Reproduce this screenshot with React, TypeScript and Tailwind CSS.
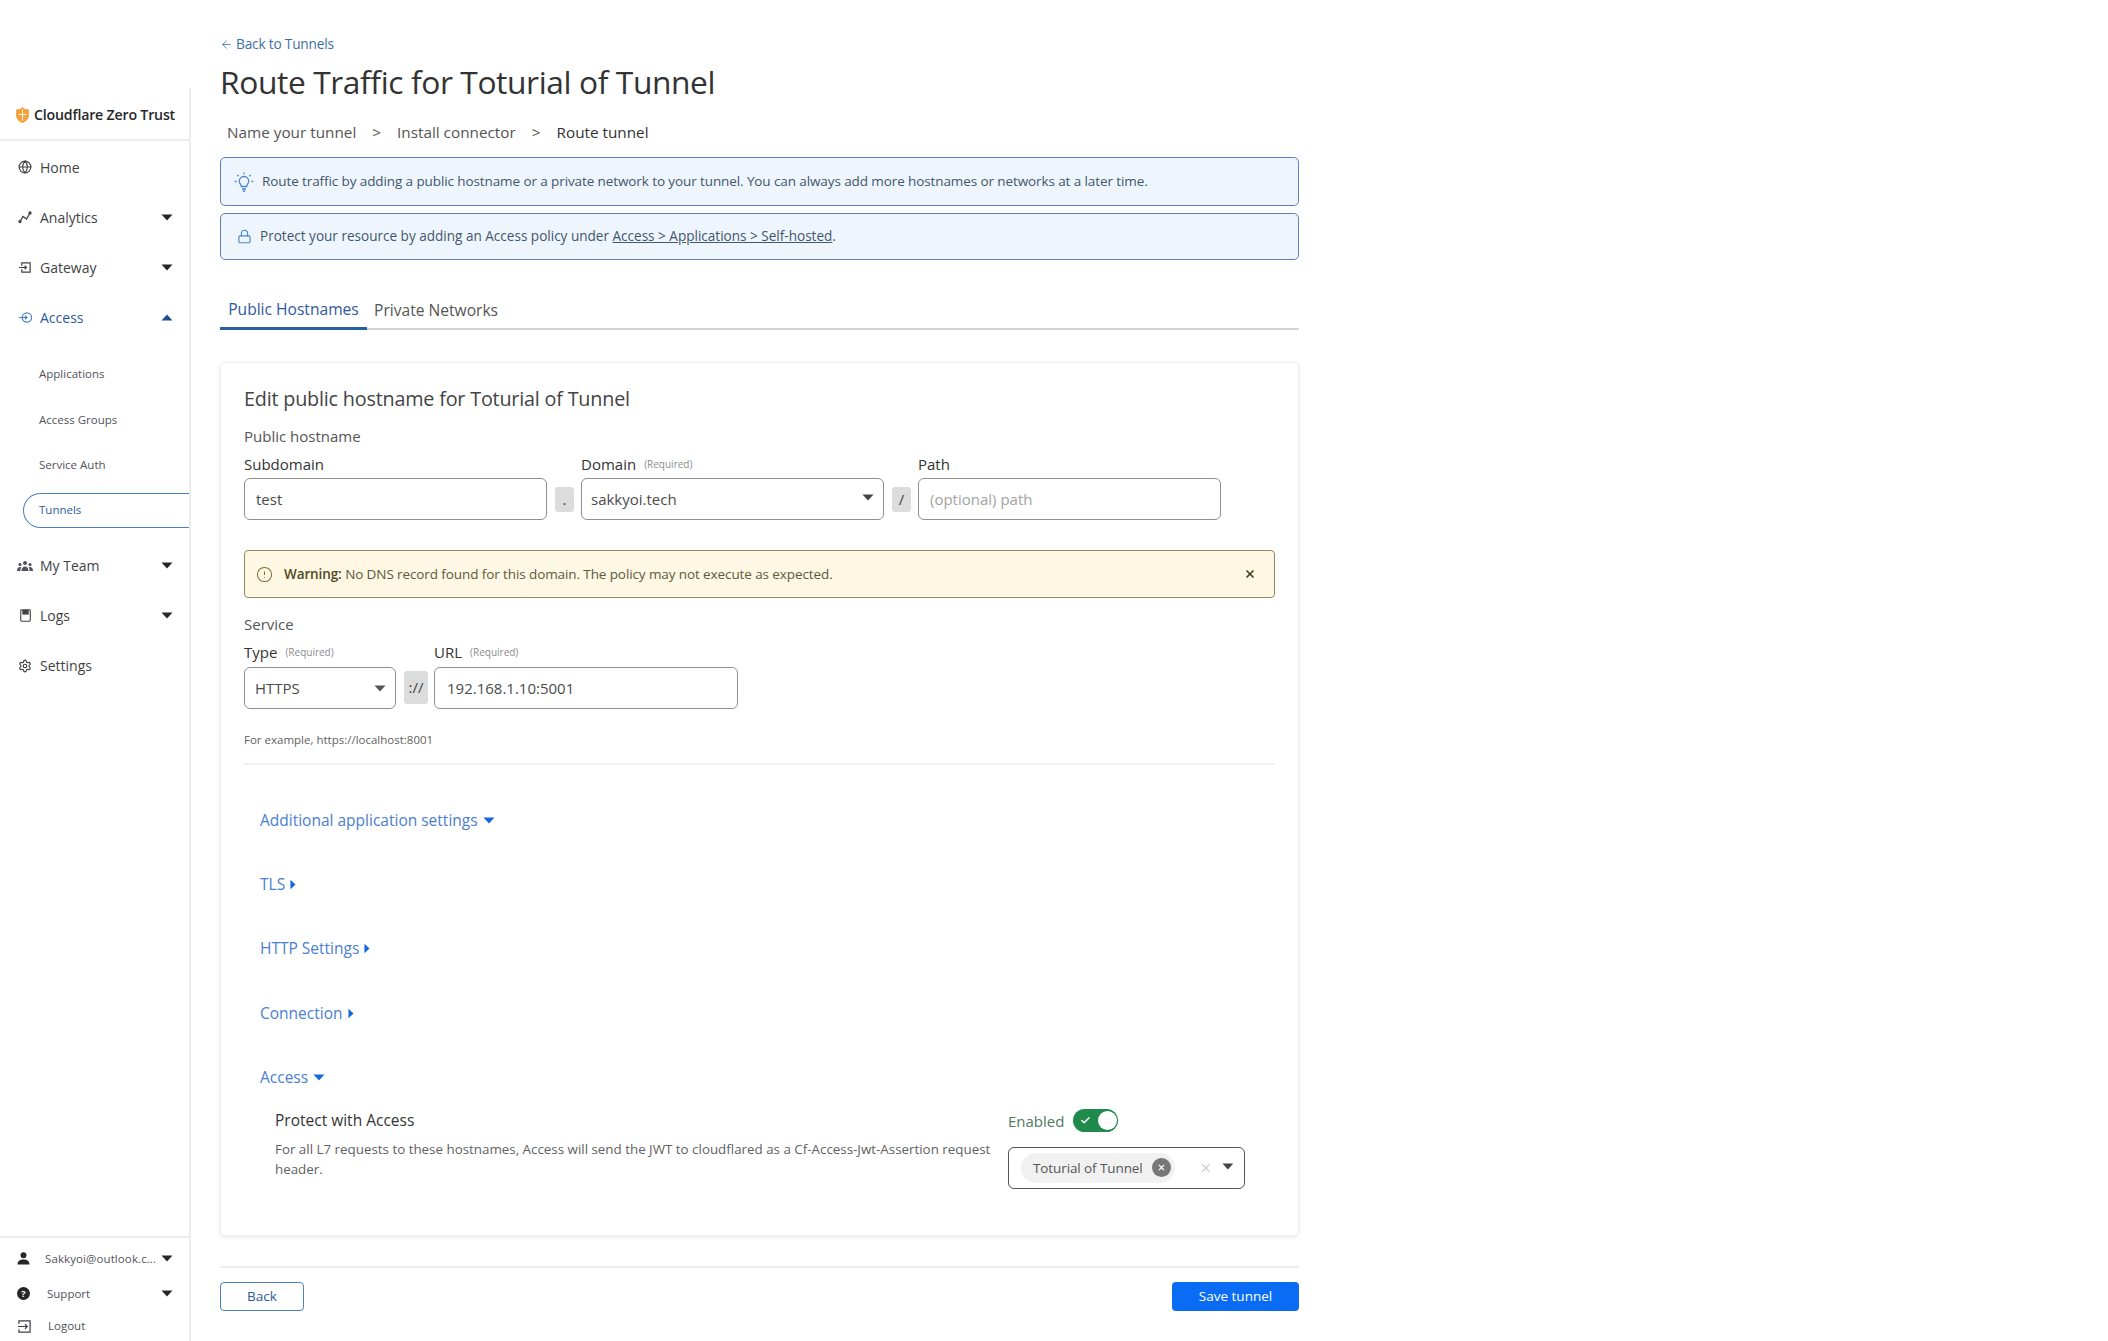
import { ArrowLeft, Check, CircleAlert, Globe, Lock, Settings, X } from "lucide-react";
import type { ReactNode } from "react";

const Caret = ({ className = "" }: { className?: string }) => (
  <svg viewBox="0 0 12 7" className={`w-[12px] h-[7px] ${className}`} fill="currentColor">
    <path d="M0.5 0.5h11L6 6.5z" />
  </svg>
);

const CaretRight = () => (
  <svg viewBox="0 0 7 12" className="w-[6px] h-[11px] text-[#1668dc]" fill="currentColor">
    <path d="M0.5 0.5v11L6.5 6z" />
  </svg>
);

const ShieldLogo = () => (
  <svg viewBox="0 0 16 18" className="w-[15px] h-[18px]">
    <path d="M8 0.5 10 2.2 14.8 3v6.5c0 3.8-3 6.600-6.800 8-3.800-1.400-6.800-4.200-6.800-8V3L6 2.200z" fill="#f6a23a" />
    <path d="M8 3v12M3.500 8.500h9" stroke="#fff" strokeWidth="1" fill="none" />
  </svg>
);

const BulbIcon = () => (
  <svg viewBox="0 0 20 20" className="w-[20px] h-[20px]" fill="none" stroke="#4a86c7" strokeWidth="1.300">
    <path d="M7.300 14.500c0-2-2-2.800-2-5.300a4.700 4.700 0 0 1 9.400 0c0 2.500-2 3.300-2 5.300z" />
    <path d="M8 17h4M8.800 19h2.400" />
    <path d="M10 0.500v1.700M3.300 3l1.200 1.200M16.700 3l-1.200 1.200M0.800 9.500h1.800M17.400 9.500h1.800" />
  </svg>
);

const AnalyticsIcon = () => (
  <svg viewBox="0 0 14 14" className="w-[14px] h-[14px]" fill="none" stroke="#3f3f46" strokeWidth="1.300">
    <path d="M2 11.500 5 6.500l3.500 2.500L12 3" />
    <circle cx="2" cy="11.500" r="1" />
    <circle cx="12" cy="3" r="1" fill="#3f3f46" />
  </svg>
);

const GatewayIcon = () => (
  <svg viewBox="0 0 16 14" className="w-[15px] h-[13px]" fill="none" stroke="#3f3f46" strokeWidth="1.300">
    <path d="M4 5V2h9v10H4V9M1 7h8M7 5l2 2-2 2" />
  </svg>
);

const AccessIcon = () => (
  <svg viewBox="0 0 16 14" className="w-[15px] h-[13px]" fill="none" stroke="#4a7fc1" strokeWidth="1.300">
    <circle cx="9.500" cy="7" r="5" />
    <path d="M0.500 7h9M7.500 5l2 2-2 2" />
  </svg>
);

const TeamIcon = () => (
  <svg viewBox="0 0 16 12" className="w-[16px] h-[12px]" fill="#52525b">
    <circle cx="8" cy="3" r="2" />
    <circle cx="3" cy="4.500" r="1.600" />
    <circle cx="13" cy="4.500" r="1.600" />
    <path d="M4.500 11c0-3 1.500-4.500 3.500-4.500s3.500 1.500 3.500 4.500zM0 11c0-2.500 1.200-4 3-4 .5 0 .9.1 1.200.3C3.600 8.300 3.400 9.500 3.400 11zM16 11c0-2.500-1.200-4-3-4-.5 0-.9.1-1.200.3.6 1 .8 2.200.8 3.700z" />
  </svg>
);

const LogsIcon = () => (
  <svg viewBox="0 0 12 14" className="w-[11px] h-[13px]" fill="none" stroke="#3f3f46" strokeWidth="1.200">
    <rect x="0.800" y="0.800" width="10.400" height="12.400" rx="1" />
    <rect x="2.500" y="1" width="7" height="5" fill="#3f3f46" stroke="none" />
  </svg>
);

const UserIcon = () => (
  <svg viewBox="0 0 14 14" className="w-[13px] h-[13px]" fill="#27272a">
    <circle cx="7" cy="3.600" r="3.200" />
    <path d="M0.500 13.500c0-3.500 2.500-5.500 6.500-5.500s6.500 2 6.500 5.500z" />
  </svg>
);

const LogoutIcon = () => (
  <svg viewBox="0 0 16 14" className="w-[15px] h-[13px]" fill="none" stroke="#3f3f46" strokeWidth="1.300">
    <path d="M2 4V1h12v12H2v-3M1 7h10M8.500 4.500 11 7l-2.500 2.500" />
  </svg>
);

const NavRow = ({
  icon,
  label,
  caret,
  active,
}: {
  icon: ReactNode;
  label: string;
  caret?: "down" | "up";
  active?: boolean;
}) => (
  <div className="h-[50px] flex items-center pl-[17px] pr-[16px]">
    <span className="w-[16px] flex justify-center shrink-0">{icon}</span>
    <span className={`ml-[7px] text-[14px] ${active ? "text-[#2c5aa0]" : "text-[#3f3f46]"}`}>{label}</span>
    {caret === "down" && <Caret className="ml-auto text-[#27272a]" />}
    {caret === "up" && <Caret className="ml-auto rotate-180 text-[#1d4f91]" />}
  </div>
);

const SubRow = ({ label }: { label: string }) => (
  <div className="h-[45.500px] flex items-center pl-[39px] text-[11.500px] text-[#52525b]">{label}</div>
);

const Required = () => <span className="ml-[8px] text-[10px] text-[#8c8c8c]">(Required)</span>;

const Label = ({ children, className = "" }: { children: ReactNode; className?: string }) => (
  <div className={`flex items-center text-[15px] text-[#333] ${className}`}>{children}</div>
);

const Field = ({ children, className = "" }: { children: ReactNode; className?: string }) => (
  <div
    className={`h-[42px] flex items-center rounded-[6px] border border-[#8f8f8f] bg-white text-[15px] text-[#4b4b4b] ${className}`}
  >
    {children}
  </div>
);

const Sep = ({ text, className = "" }: { text: string; className?: string }) => (
  <div
    className={`rounded-[3px] bg-[#dcdcdc] flex items-center justify-center text-[15px] text-[#444] ${className}`}
  >
    {text}
  </div>
);

const Section = ({ label, open }: { label: string; open?: boolean }) => (
  <div className="h-[64.400px] flex items-center gap-[5px] text-[15.500px] text-[#4a80cf]">
    {label}
    {open ? <Caret className="text-[#1668dc]" /> : <CaretRight />}
  </div>
);

const App = () => {
  return (
    <div
      className="flex w-[2108px] h-[1341px] overflow-hidden bg-white"
      style={{ fontFamily: '"Open Sans", "Noto Sans", sans-serif' }}
    >
      {/* sidebar */}
      <aside className="w-[191px] h-full pt-[88px] shrink-0">
        <div className="h-full flex flex-col border-r-2 border-[#ececec]">
          <div className="h-[53px] flex items-center gap-[4px] pl-[15px] pt-[2px] border-b-2 border-[#ececec]">
            <ShieldLogo />
            <span className="text-[14.200px] font-semibold text-[#27272a] tracking-[-0.2px] whitespace-nowrap">
              Cloudflare Zero Trust
            </span>
          </div>
          <div className="pt-[1px]">
            <NavRow icon={<Globe size={14} color="#3f3f46" />} label="Home" />
            <NavRow icon={<AnalyticsIcon />} label="Analytics" caret="down" />
            <NavRow icon={<GatewayIcon />} label="Gateway" caret="down" />
            <NavRow icon={<AccessIcon />} label="Access" caret="up" active />
            <div className="pt-[9px] pb-[13px]">
              <SubRow label="Applications" />
              <SubRow label="Access Groups" />
              <SubRow label="Service Auth" />
              <div className="pl-[23px] h-[35px] mt-[5px]">
                <div className="h-full flex items-center pl-[15px] rounded-l-full border border-r-0 border-[#4a7fc1] text-[11.500px] text-[#2c5aa0]">
                  Tunnels
                </div>
              </div>
            </div>
            <NavRow icon={<TeamIcon />} label="My Team" caret="down" />
            <NavRow icon={<LogsIcon />} label="Logs" caret="down" />
            <NavRow icon={<Settings size={14} color="#3f3f46" />} label="Settings" />
          </div>
          <div className="mt-auto border-t-2 border-[#ececec] pt-[3px] text-[11.500px] text-[#52525b]">
            <div className="h-[35px] flex items-center pl-[17px] pr-[16px]">
              <UserIcon />
              <span className="ml-[15px] whitespace-nowrap tracking-[0.1px]">Sakkyoi@outlook.c...</span>
              <Caret className="ml-auto text-[#27272a]" />
            </div>
            <div className="h-[35px] flex items-center pl-[17px] pr-[16px]">
              <span className="w-[13px] h-[13px] rounded-full bg-[#27272a] text-white text-[9px] font-bold flex items-center justify-center">
                ?
              </span>
              <span className="ml-[17px]">Support</span>
              <Caret className="ml-auto text-[#27272a]" />
            </div>
            <div className="h-[30px] flex items-center pl-[17px]">
              <LogoutIcon />
              <span className="ml-[16px]">Logout</span>
            </div>
          </div>
        </div>
      </aside>

      {/* main */}
      <main className="ml-[29px] w-[1079px] pt-[33px]">
        <div className="h-[22px] flex items-center gap-[3px] text-[13.700px] text-[#3d6fa8] tracking-[-0.2px]">
          <ArrowLeft size={13} strokeWidth={1.5} />
          Back to Tunnels
        </div>
        <h1 className="mt-[4px] h-[46px] flex items-center text-[31.750px] text-[#333] tracking-[-0.4px] leading-none">
          Route Traffic for Toturial of Tunnel
        </h1>
        <div className="mt-[15px] h-[24px] flex items-center pl-[7px] text-[15.300px] text-[#555]">
          <span>Name your tunnel</span>
          <span className="mx-[16px]">&gt;</span>
          <span>Install connector</span>
          <span className="mx-[16px]">&gt;</span>
          <span className="text-[#333] font-medium">Route tunnel</span>
        </div>

        <div className="mt-[13px] h-[49px] flex items-center pl-[13px] rounded-[5px] border border-[#5b83b5] bg-[#eef5fc] text-[13.500px] text-[#42566e] tracking-[-0.1px]">
          <BulbIcon />
          <span className="ml-[8px]">
            Route traffic by adding a public hostname or a private network to your tunnel. You can always add more
            hostnames or networks at a later time.
          </span>
        </div>
        <div className="mt-[7px] h-[47px] flex items-center pl-[16px] rounded-[5px] border border-[#5b83b5] bg-[#eef5fc] text-[13.550px] text-[#42566e]">
          <Lock size={15} color="#4a86c7" strokeWidth={1.8} />
          <span className="ml-[8px]">
            Protect your resource by adding an Access policy under{" "}
            <span className="underline">Access &gt; Applications &gt; Self-hosted</span>.
          </span>
        </div>

        <div className="mt-[33px] h-[37px] flex items-stretch border-b-2 border-[#d4d4d4] text-[15.600px]">
          <div className="-mb-[2px] w-[147px] flex items-center justify-center border-b-[3px] border-[#27609f] text-[#2c5aa0]">
            Public Hostnames
          </div>
          <div className="ml-[7px] flex items-center text-[#555]">Private Networks</div>
        </div>

        {/* card */}
        <section className="mt-[32px] h-[874px] rounded-[5px] border border-[#eeeeee] shadow-[0_1px_4px_rgba(0,0,0,0.1)] px-[23px] pt-[21px]">
          <h2 className="h-[30px] flex items-center text-[19.800px] text-[#444] tracking-[-0.2px]">
            Edit public hostname for Toturial of Tunnel
          </h2>
          <div className="mt-[10px] h-[24px] flex items-center text-[15px] text-[#555]">Public hostname</div>
          <div className="flex mt-[2px]">
            <div className="w-[303px]">
              <Label className="h-[28px]">Subdomain</Label>
              <Field className="pl-[11px]">test</Field>
            </div>
            <Sep text="." className="w-[19px] h-[25px] mt-[37px] ml-[8px] mr-[7px]" />
            <div className="w-[303px]">
              <Label className="h-[28px]">
                Domain
                <Required />
              </Label>
              <Field className="pl-[9px] pr-[9px] justify-between">
                sakkyoi.tech
                <Caret className="-mt-[3px] text-[#444]" />
              </Field>
            </div>
            <Sep text="/" className="w-[19px] h-[25px] mt-[37px] ml-[8px] mr-[7px]" />
            <div className="w-[303px]">
              <Label className="h-[28px]">Path</Label>
              <Field className="pl-[11px] text-[#a3a3a3]">(optional) path</Field>
            </div>
          </div>

          <div className="mt-[30px] h-[48px] flex items-center pl-[11px] pr-[18px] rounded-[4px] border border-[#918a62] bg-[#fdf7e3] text-[13.500px] text-[#5f5a3e] tracking-[-0.1px]">
            <CircleAlert size={17} color="#7c7038" strokeWidth={1.5} />
            <span className="ml-[11px]">
              <span className="font-semibold text-[#51491f]">Warning:</span> No DNS record found for this domain. The
              policy may not execute as expected.
            </span>
            <X size={12} strokeWidth={3.5} color="#4a4320" className="ml-auto" />
          </div>

          <div className="mt-[14px] h-[24px] flex items-center text-[15px] text-[#555]">Service</div>
          <div className="flex mt-[1px]">
            <div className="w-[152px]">
              <Label className="h-[30px]">
                Type
                <Required />
              </Label>
              <Field className="pl-[10px] pr-[9px] justify-between text-[14px]">
                HTTPS
                <Caret className="text-[#555]" />
              </Field>
            </div>
            <Sep text="://" className="w-[24px] h-[33px] mt-[34px] ml-[8px] mr-[6px]" />
            <div className="w-[304px]">
              <Label className="h-[30px]">
                URL
                <Required />
              </Label>
              <Field className="pl-[12px] text-[14.500px]">192.168.1.10:5001</Field>
            </div>
          </div>
          <div className="mt-[21px] h-[20px] flex items-center text-[11.500px] text-[#5f5f5f]">
            For example, https://localhost:8001
          </div>
          <div className="mt-[13px] border-t-2 border-[#efefef]" />

          <div className="pl-[16px] mt-[23px]">
            <Section label="Additional application settings" open />
            <Section label="TLS" />
            <Section label="HTTP Settings" />
            <Section label="Connection" />
            <Section label="Access" open />
          </div>

          <div className="pl-[31px] flex -mt-[2px]">
            <div className="w-[733px] shrink-0">
              <div className="h-[26px] flex items-center text-[15.500px] font-medium text-[#333]">Protect with Access</div>
              <p className="mt-[5px] text-[13.370px] leading-[20px] text-[#5f5f5f]">
                For all L7 requests to these hostnames, Access will send the JWT to cloudflared as a
                Cf-Access-Jwt-Assertion request header.
              </p>
            </div>
            <div className="w-[237px] shrink-0">
              <div className="h-[26px] flex items-center text-[15px] text-[#4f7a60]">
                Enabled
                <span className="ml-[9px] w-[45px] h-[23px] rounded-full bg-[#1f8a4c] flex items-center pl-[7px] pr-[1px] justify-between">
                  <Check size={11} color="#fff" strokeWidth={3} />
                  <span className="w-[19px] h-[19px] rounded-full bg-white" />
                </span>
              </div>
              <div className="mt-[13px] h-[42px] flex items-center pl-[12px] pr-[10px] rounded-[6px] border border-[#555] text-[13.500px] text-[#555]">
                <span className="h-[30px] w-[157px] rounded-full bg-[#f1f1f1] flex items-center pl-[12px] pr-[4px] justify-between whitespace-nowrap tracking-[-0.1px]">
                  Toturial of Tunnel
                  <span className="w-[19px] h-[19px] rounded-full bg-[#777] flex items-center justify-center">
                    <X size={9} color="#fff" strokeWidth={3} />
                  </span>
                </span>
                <X size={14} color="#c4c4c4" className="ml-[24px]" />
                <Caret className="ml-[10px] -mt-[3px] text-[#444]" />
              </div>
            </div>
          </div>
        </section>

        <div className="mt-[30px] border-t-2 border-[#eeeeee] pt-[14px] flex justify-between">
          <button className="w-[84px] h-[29px] rounded-[4px] border border-[#4a7fc1] text-[13.500px] text-[#2c5aa0]">
            Back
          </button>
          <button className="w-[127px] h-[29px] rounded-[4px] bg-[#0a6cf5] text-[13.500px] text-white">Save tunnel</button>
        </div>
      </main>
    </div>
  );
};

export default App;
